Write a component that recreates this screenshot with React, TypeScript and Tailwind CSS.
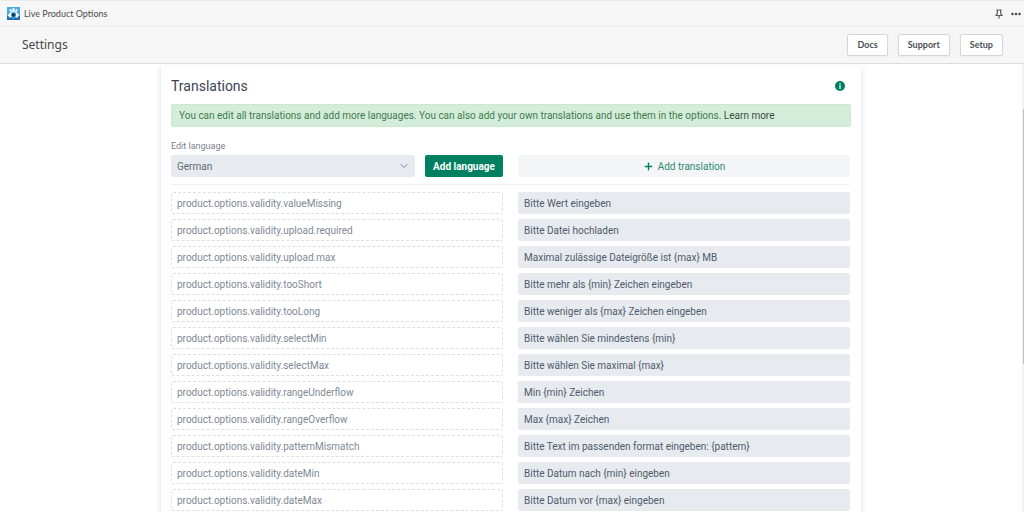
import { useState } from 'react'
import { ChevronDown, Plus } from 'lucide-react'

const languages = ['German', 'English', 'French']

const initialTranslations = [
  { key: 'product.options.validity.valueMissing', value: 'Bitte Wert eingeben' },
  { key: 'product.options.validity.upload.required', value: 'Bitte Datei hochladen' },
  { key: 'product.options.validity.upload.max', value: 'Maximal zulässige Dateigröße ist {max} MB' },
  { key: 'product.options.validity.tooShort', value: 'Bitte mehr als {min} Zeichen eingeben' },
  { key: 'product.options.validity.tooLong', value: 'Bitte weniger als {max} Zeichen eingeben' },
  { key: 'product.options.validity.selectMin', value: 'Bitte wählen Sie mindestens {min}' },
  { key: 'product.options.validity.selectMax', value: 'Bitte wählen Sie maximal {max}' },
  { key: 'product.options.validity.rangeUnderflow', value: 'Min {min} Zeichen' },
  { key: 'product.options.validity.rangeOverflow', value: 'Max {max} Zeichen' },
  { key: 'product.options.validity.patternMismatch', value: 'Bitte Text im passenden format eingeben: {pattern}' },
  { key: 'product.options.validity.dateMin', value: 'Bitte Datum nach {min} eingeben' },
  { key: 'product.options.validity.dateMax', value: 'Bitte Datum vor {max} eingeben' },
]

function AppLogo() {
  return (
    <svg viewBox="0 0 13 13" className="h-[13px] w-[13px]" aria-hidden="true">
      <rect width="13" height="13" rx="0.5" fill="#4ba9df" />
      <path d="M0 8.500 3.500 9.500 6.500 12 9.500 9.500 13 8.500V13H0Z" fill="#1c6db0" />
      <path d="M.8 8 3.500 5.200h6L12.200 8 10.500 10.800 6.500 9.500 2.500 10.800Z" fill="#f4fafd" />
      <path d="M5.200 1.200h2.600v4H5.200zM2.300 2.600l1.700-.8 1 2.600-1.700.8zM10.700 2.600l-1.700-.8-1 2.600 1.700.8z" fill="#e6f4fb" />
      <circle cx="6.500" cy="7.800" r="2.500" fill="#3587b9" />
      <circle cx="6.500" cy="8" r="1.700" fill="#123a5c" />
    </svg>
  )
}

function PinIcon() {
  return (
    <svg viewBox="0 0 8 10" className="h-[10px] w-2" fill="none" stroke="#55585b" aria-hidden="true">
      <path d="M1.500 1h5M2.300 1v3.500L1 6.500h6L5.700 4.500V1M4 6.500V9.500" strokeWidth="1.200" />
    </svg>
  )
}

function InfoIcon() {
  return (
    <svg viewBox="0 0 10 10" className="h-[10px] w-[10px]" aria-hidden="true">
      <circle cx="5" cy="5" r="5" fill="#008060" />
      <path d="M5 2v1.200M5 4v4" stroke="#fff" strokeWidth="1.200" />
    </svg>
  )
}

function HeaderButton({ children }: { children: string }) {
  return (
    <button className="h-[22px] rounded-xs border border-[#d3d7da] bg-white px-[9px] font-[Lato,sans-serif] text-[9px] font-bold text-[#4a4e52] shadow-xs hover:bg-gray-50">
      {children}
    </button>
  )
}

export default function App() {
  const [language, setLanguage] = useState('German')
  const [rows, setRows] = useState(initialTranslations)

  const updateValue = (index: number, value: string) =>
    setRows((prev) => prev.map((row, i) => (i === index ? { ...row, value } : row)))

  return (
    <div className="flex h-screen flex-col overflow-hidden bg-white font-[Roboto,sans-serif] text-[10px] text-[#4f5b6b]">
      {/* App bar */}
      <div className="flex h-[27px] shrink-0 items-center border-y border-[#ebebeb] bg-[#f6f6f6] pl-[7px] pr-[3px]">
        <AppLogo />
        <span className="ml-1 font-[Lato,sans-serif] text-[9px] text-[#4a4d50]">Live Product Options</span>
        <div className="ml-auto flex items-center gap-2">
          <button aria-label="Pin app"><PinIcon /></button>
          <button aria-label="More actions">
            <svg viewBox="0 0 10 4" className="h-1 w-[10px]" fill="#4a4d50" aria-hidden="true">
              <circle cx="1.400" cy="2" r="1.300" />
              <circle cx="5" cy="2" r="1.300" />
              <circle cx="8.600" cy="2" r="1.300" />
            </svg>
          </button>
        </div>
      </div>

      {/* Page header */}
      <header className="flex h-[37px] shrink-0 items-center border-b border-[#dcdcdc] bg-[#f6f6f6] pl-[22px] pr-[21px]">
        <h1 className="font-['Noto_Sans',sans-serif] text-[12px] text-[#45484b]">Settings</h1>
        <div className="ml-auto flex gap-[10px]">
          <HeaderButton>Docs</HeaderButton>
          <HeaderButton>Support</HeaderButton>
          <HeaderButton>Setup</HeaderButton>
        </div>
      </header>

      <div className="flex min-h-0 flex-1">
        <main className="min-w-0 flex-1 overflow-hidden pt-px">
          <section className="mx-auto max-w-[700px] bg-white px-[10px] pb-4 pt-[11px] shadow-[0_3px_6px_1px_#e4e7ed]">
            <div className="flex h-5 items-center justify-between pr-[6px]">
              <h2 className="text-[14px] text-[#3c4454]">Translations</h2>
              <button aria-label="About translations"><InfoIcon /></button>
            </div>

            <p className="mt-2 rounded-xs border border-[#c9e9d0] bg-[#d4edda] px-[7px] leading-[21px] text-[#3f7a4d]">
              You can edit all translations and add more languages. You can also add your own translations and use them in the options.{' '}
              <a href="#learn-more" className="text-[#34503c]">Learn more</a>
            </p>

            <div className="pr-px">
              <div className="grid grid-cols-2 items-end gap-x-[15px] border-b border-[#edeff1] pb-[7px] pt-3">
                <div className="flex items-end gap-[10px]">
                  <div className="flex-1">
                    <label htmlFor="language" className="block h-4 text-[9px] leading-[14px] text-[#78818e]">Edit language</label>
                    <div className="relative">
                      <select
                        id="language"
                        value={language}
                        onChange={(e) => setLanguage(e.target.value)}
                        className="block h-[22px] w-full appearance-none rounded-xs bg-[#e7eaef] px-[6px] text-[#606a79]"
                      >
                        {languages.map((name) => (
                          <option key={name}>{name}</option>
                        ))}
                      </select>
                      <ChevronDown className="pointer-events-none absolute right-[5px] top-[5px] h-3 w-3 text-[#7d8693]" />
                    </div>
                  </div>
                  <button className="h-[22px] w-[78px] rounded-xs bg-[#008060] font-bold text-white hover:bg-[#006e52]">
                    Add language
                  </button>
                </div>
                <button className="flex h-[22px] items-center justify-center gap-1 rounded-xs bg-[#f3f5f7] text-[#2e8b70] hover:bg-[#e9edf0]">
                  <Plus className="h-[11px] w-[11px] text-[#008060]" strokeWidth={3} />
                  Add translation
                </button>
              </div>

              <div className="mt-[7px] space-y-[5px]">
                {rows.map((row, i) => (
                  <div key={row.key} className="grid grid-cols-2 gap-x-[15px]">
                    <input
                      readOnly
                      value={row.key}
                      aria-label={`Key ${i + 1}`}
                      className="h-[22px] min-w-0 rounded-xs border border-dashed border-[#dcdfe4] px-[5px] text-[#808995]"
                    />
                    <input
                      value={row.value}
                      onChange={(e) => updateValue(i, e.target.value)}
                      aria-label={row.key}
                      className="h-[22px] min-w-0 rounded-xs bg-[#e7eaef] px-[6px] text-[#4f5b6b]"
                    />
                  </div>
                ))}
              </div>
            </div>
          </section>
        </main>
        {/* Scroll track */}
        <div className="flex w-[2px] flex-col items-end bg-[#f1f1f1]">
          <div className="h-[10%]" />
          <div className="h-[57%] w-px bg-[#c1c1c1]" />
        </div>
      </div>
    </div>
  )
}
